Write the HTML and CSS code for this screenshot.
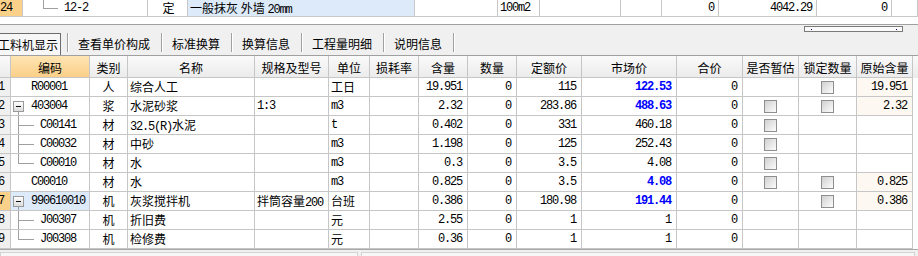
FILE: index.html
```html
<!DOCTYPE html>
<html lang="zh-CN">
<head>
<meta charset="UTF-8">
<title>工料机显示</title>
<link rel="stylesheet" href="styles.css">
</head>
<body>
<div class="page">
    <!-- 上方定额表的最后一行 -->
    <div class="qrow">
        <div class="idx n">24</div>
        <div class="sub"><span class="tl"></span><span class="n">12-2</span></div>
        <div class="c">定</div>
        <div class="blue">一般抹灰 外墙 <span class="n">20mm</span></div>
        <div></div>
        <div class="n">100m2</div>
        <div></div>
        <div></div>
        <div class="n r">0</div>
        <div class="n r">4042.29</div>
        <div class="n r">0</div>
        <div></div>
    </div>
    <div class="gap"></div>

    <!-- 页签 -->
    <div class="band">
        <div class="grip"></div>
        <div class="tabs">
            <span class="tab on">工料机显示</span>
            <span class="sep"></span>
            <span class="tab">查看单价构成</span>
            <span class="sep"></span>
            <span class="tab">标准换算</span>
            <span class="sep"></span>
            <span class="tab">换算信息</span>
            <span class="sep"></span>
            <span class="tab">工程量明细</span>
            <span class="sep"></span>
            <span class="tab">说明信息</span>
            <span class="sep"></span>
        </div>
    </div>

    <!-- 工料机表格 -->
    <div class="grid">
        <div class="row hd">
            <div></div>
            <div class="on">编码</div>
            <div>类别</div>
            <div>名称</div>
            <div>规格及型号</div>
            <div>单位</div>
            <div>损耗率</div>
            <div>含量</div>
            <div>数量</div>
            <div>定额价</div>
            <div>市场价</div>
            <div>合价</div>
            <div>是否暂估</div>
            <div>锁定数量</div>
            <div>原始含量</div>
            <div></div>
        </div>

        <div class="row">
            <div class="i n">1</div>
            <div class="code"><span class="tw"></span><span class="n">R00001</span></div>
            <div class="c">人</div>
            <div>综合人工</div>
            <div></div>
            <div>工日</div>
            <div></div>
            <div class="n r">19.951</div>
            <div class="n r">0</div>
            <div class="n r">115</div>
            <div class="n r b">122.53</div>
            <div class="n r">0</div>
            <div class="c"></div>
            <div class="c"><i class="cb"></i></div>
            <div class="n r org">19.951</div>
            <div></div>
        </div>
        <div class="row">
            <div class="i n">2</div>
            <div class="code"><span class="tw open"><i class="pm"></i></span><span class="n">403004</span></div>
            <div class="c">浆</div>
            <div>水泥砂浆</div>
            <div class="n">1:3</div>
            <div class="n">m3</div>
            <div></div>
            <div class="n r">2.32</div>
            <div class="n r">0</div>
            <div class="n r">283.86</div>
            <div class="n r b">488.63</div>
            <div class="n r">0</div>
            <div class="c"><i class="cb"></i></div>
            <div class="c"><i class="cb"></i></div>
            <div class="n r org">2.32</div>
            <div></div>
        </div>
        <div class="row">
            <div class="i n">3</div>
            <div class="code"><span class="tw kid"></span><span class="n">C00141</span></div>
            <div class="c">材</div>
            <div><span class="n">32.5(R)</span>水泥</div>
            <div></div>
            <div class="n">t</div>
            <div></div>
            <div class="n r">0.402</div>
            <div class="n r">0</div>
            <div class="n r">331</div>
            <div class="n r">460.18</div>
            <div class="n r">0</div>
            <div class="c"><i class="cb"></i></div>
            <div class="c"></div>
            <div></div>
            <div></div>
        </div>
        <div class="row">
            <div class="i n">4</div>
            <div class="code"><span class="tw kid"></span><span class="n">C00032</span></div>
            <div class="c">材</div>
            <div>中砂</div>
            <div></div>
            <div class="n">m3</div>
            <div></div>
            <div class="n r">1.198</div>
            <div class="n r">0</div>
            <div class="n r">125</div>
            <div class="n r">252.43</div>
            <div class="n r">0</div>
            <div class="c"><i class="cb"></i></div>
            <div class="c"></div>
            <div></div>
            <div></div>
        </div>
        <div class="row">
            <div class="i n">5</div>
            <div class="code"><span class="tw kid last"></span><span class="n">C00010</span></div>
            <div class="c">材</div>
            <div>水</div>
            <div></div>
            <div class="n">m3</div>
            <div></div>
            <div class="n r">0.3</div>
            <div class="n r">0</div>
            <div class="n r">3.5</div>
            <div class="n r">4.08</div>
            <div class="n r">0</div>
            <div class="c"><i class="cb"></i></div>
            <div class="c"></div>
            <div></div>
            <div></div>
        </div>
        <div class="row">
            <div class="i n">6</div>
            <div class="code"><span class="tw"></span><span class="n">C00010</span></div>
            <div class="c">材</div>
            <div>水</div>
            <div></div>
            <div class="n">m3</div>
            <div></div>
            <div class="n r">0.825</div>
            <div class="n r">0</div>
            <div class="n r">3.5</div>
            <div class="n r b">4.08</div>
            <div class="n r">0</div>
            <div class="c"><i class="cb"></i></div>
            <div class="c"><i class="cb"></i></div>
            <div class="n r org">0.825</div>
            <div></div>
        </div>
        <div class="row">
            <div class="i n sel">7</div>
            <div class="code cur"><span class="tw open"><i class="pm"></i></span><span class="n">990610010</span></div>
            <div class="c">机</div>
            <div>灰浆搅拌机</div>
            <div>拌筒容量<span class="n">200</span></div>
            <div>台班</div>
            <div></div>
            <div class="n r">0.386</div>
            <div class="n r">0</div>
            <div class="n r">180.98</div>
            <div class="n r b">191.44</div>
            <div class="n r">0</div>
            <div class="c"></div>
            <div class="c"><i class="cb"></i></div>
            <div class="n r org">0.386</div>
            <div></div>
        </div>
        <div class="row">
            <div class="i n">8</div>
            <div class="code"><span class="tw kid"></span><span class="n">J00307</span></div>
            <div class="c">机</div>
            <div>折旧费</div>
            <div></div>
            <div>元</div>
            <div></div>
            <div class="n r">2.55</div>
            <div class="n r">0</div>
            <div class="n r">1</div>
            <div class="n r">1</div>
            <div class="n r">0</div>
            <div class="c"></div>
            <div class="c"></div>
            <div></div>
            <div></div>
        </div>
        <div class="row">
            <div class="i n">9</div>
            <div class="code"><span class="tw kid last"></span><span class="n">J00308</span></div>
            <div class="c">机</div>
            <div>检修费</div>
            <div></div>
            <div>元</div>
            <div></div>
            <div class="n r">0.36</div>
            <div class="n r">0</div>
            <div class="n r">1</div>
            <div class="n r">1</div>
            <div class="n r">0</div>
            <div class="c"></div>
            <div class="c"></div>
            <div></div>
            <div></div>
        </div>
    </div>

    <!-- 底部滚动条 -->
    <div class="foot">
        <div class="sb left"></div>
        <div class="sb right"></div>
    </div>
</div>
</body>
</html>
```

FILE: styles.css
```css
* {
    box-sizing: border-box;
}

body {
    margin: 0;
    background: #fff;
    color: #000;
    font-family: "Noto Sans CJK SC", sans-serif;
    font-size: 12px;
}

.page {
    width: 918px;
    height: 256px;
    overflow: hidden;
}

/* 数字 (等宽) */
.n {
    font-family: "Liberation Mono", monospace;
    letter-spacing: -1.2px;
}
.r {
    text-align: right;
}
.c {
    text-align: center;
}

/* 上方定额行 */
.qrow {
    display: grid;
    grid-template-columns: 23px 125px 40px 227px 83px 42px 81px 41px 57px 98px 75px 26px;
    height: 17px;
}
.qrow > div {
    border-right: 1px solid #c8c8c8;
    border-bottom: 1px solid #c8c8c8;
    padding-left: 2px;
    line-height: 16px;
    white-space: nowrap;
    overflow: hidden;
}
.qrow > .r {
    padding-right: 4px;
}
.qrow > .idx {
    background: #fbd18a;
    padding-left: 0;
}
.qrow > .blue {
    background: #dceafa;
}
.qrow > .sub {
    display: flex;
    padding-left: 0;
}
.tl {
    flex: none;
    width: 41px;
    background:
        linear-gradient(#a0a0a0, #a0a0a0) 20px 0 / 1px 9px no-repeat,
        linear-gradient(#a0a0a0, #a0a0a0) 20px 8px / 15px 1px no-repeat;
}

.gap {
    height: 7px;
}

/* 页签 */
.band {
    height: 32px;
    display: flex;
    flex-direction: column;
    background: #f0f0f0;
    border-top: 1px solid #a0a0a0;
    border-bottom: 1px solid #a0a0a0;
}
.grip {
    align-self: flex-end;
    width: 99px;
    height: 6px;
    margin: 1px 15px 0 0;
    border: 1px solid #7a7a7a;
    background:
        linear-gradient(#000080, #000080) 6px 2px / 1px 1px no-repeat,
        linear-gradient(#000080, #000080) 91px 2px / 1px 1px no-repeat,
        #fafafa;
}
.tabs {
    display: flex;
    align-items: flex-start;
    margin-top: 1px;
    height: 22px;
}
.tab {
    padding: 0 11px 0 10px;
    line-height: 21px;
    white-space: nowrap;
}
.tab.on {
    width: 61px;
    height: 22px;
    margin-right: 6px;
    padding: 0;
    text-indent: -2px;
    overflow: hidden;
    background: #f7f7f7;
    border-top: 1px solid #6c6c6c;
    border-right: 1px solid #6c6c6c;
}
.sep {
    width: 1px;
    height: 19px;
    background: #a0a0a0;
    box-shadow: 1px 0 #fff;
}

/* 表格 */
.row {
    display: grid;
    grid-template-columns: 11px 79px 38px 127px 74px 41px 49px 49px 49px 65px 95px 66px 56px 58px 56px 5px;
    height: 19px;
}
.row > div {
    border-right: 1px solid #c6c6c6;
    border-bottom: 1px solid #c6c6c6;
    padding-left: 2px;
    line-height: 18px;
    white-space: nowrap;
    overflow: hidden;
}
.row > div:last-child {
    border: 0;
}
.row > .r {
    padding-right: 5px;
}
.row > .c {
    padding-left: 0;
}

.hd {
    height: 22px;
    background: linear-gradient(#fafafa, #ebebeb);
}
.hd > div {
    padding: 2px 0 0;
    line-height: 19px;
    text-align: center;
}
.hd > .on {
    background: linear-gradient(#fee5b3, #fbcf88);
}

.row > .i {
    padding-left: 0;
    text-indent: -2px;
    background: #f0f0f0;
}
.row > .sel {
    background: #fbd18a;
}

.b {
    color: #0000ff;
    font-weight: bold;
}
.row > .org {
    background: #fdf8f1;
}

/* 编码列的树形 */
.row > .code {
    display: flex;
    padding-left: 0;
}
.row > .cur {
    background: #dceafa;
}
.tw {
    flex: none;
    width: 20px;
}
.tw.open {
    background: linear-gradient(#a0a0a0, #a0a0a0) 7px 15px / 1px 4px no-repeat;
}
.tw.kid {
    width: 29px;
    background:
        linear-gradient(#a0a0a0, #a0a0a0) 7px 0 / 1px 100% no-repeat,
        linear-gradient(#a0a0a0, #a0a0a0) 7px 9px / 16px 1px no-repeat;
}
.tw.kid.last {
    background:
        linear-gradient(#a0a0a0, #a0a0a0) 7px 0 / 1px 10px no-repeat,
        linear-gradient(#a0a0a0, #a0a0a0) 7px 9px / 16px 1px no-repeat;
}
.pm {
    display: block;
    width: 11px;
    height: 11px;
    margin: 4px 0 0 2px;
    border: 1px solid #9a9a9a;
    background:
        linear-gradient(#111, #111) 2px 4px / 5px 1px no-repeat,
        linear-gradient(#fff, #dcdcdc);
}

/* 复选框 */
.cb {
    display: block;
    width: 13px;
    height: 13px;
    margin: 3px auto 0;
    border: 1px solid #8e8e8e;
    background: linear-gradient(135deg, #d0d0d0, #fcfcfc);
}

/* 底部 */
.foot {
    display: flex;
    gap: 3px;
    height: 7px;
    padding-top: 2px;
    background: #f0f0f0;
    border-top: 1px solid #a8a8a8;
}
.sb {
    height: 10px;
    border: 1px solid #d4d4d4;
    background: #f7f7f7;
}
.sb.left {
    width: 358px;
}
.sb.right {
    width: 554px;
}
```
